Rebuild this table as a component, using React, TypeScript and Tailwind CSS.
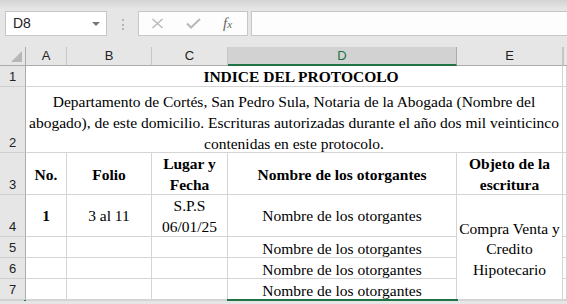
import React from "react";

const cellFont = { fontFamily: '"Liberation Serif", "Times New Roman", serif' };

const colHeaders = [
  { label: "A", selected: false },
  { label: "B", selected: false },
  { label: "C", selected: false },
  { label: "D", selected: true },
  { label: "E", selected: false },
];

const RowHead = ({ n, selected }: { n: number; selected?: boolean }) => (
  <div
    className={
      selected
        ? "flex items-start justify-center border-r-2 border-[#217346] bg-[#d2d2d2] text-[13px] text-[#217346]"
        : "flex items-end justify-center border-r border-b border-r-[#ababab] border-b-[#cfcfcf] bg-[#e6e6e6] pb-[1px] text-[13px] leading-[16px] text-[#222]"
    }
  >
    {selected ? null : n}
  </div>
);

const Cell = ({ className = "", children }: { className?: string; children?: React.ReactNode }) => (
  <div className={"border-r border-b border-[#d4d4d4] bg-white " + className}>{children}</div>
);

const App = () => {
  return (
    <div
      className="h-[304px] w-[567px] overflow-hidden bg-[#e6e6e6]"
      style={{ fontFamily: '"Liberation Sans", Arial, sans-serif' }}
    >
      {/* formula bar */}
      <div className="flex h-[47px] items-start bg-[linear-gradient(to_bottom,#d3d3d3_0px,#e6e6e6_9px)] pt-[11px]">
        <div className="ml-[5px] flex h-[25px] w-[102px] items-center justify-between border border-[#c6c6c6] bg-white pl-[7px] pr-[6px] text-[14px] text-[#222]">
          <span>D8</span>
          <span className="h-0 w-0 border-x-[4px] border-t-[4px] border-x-transparent border-t-[#777]" />
        </div>
        <div className="ml-[15px] flex flex-col gap-[2.5px] pt-[8px]">
          <span className="h-[2px] w-[2px] bg-[#b4b4b4]" />
          <span className="h-[2px] w-[2px] bg-[#b4b4b4]" />
          <span className="h-[2px] w-[2px] bg-[#b4b4b4]" />
        </div>
        <div className="ml-[14px] flex h-[25px] w-[110px] items-center border border-[#c6c6c6] bg-[#fdfdfd]">
          <svg width="13" height="11" viewBox="0 0 13 11" className="ml-[12px]">
            <path d="M1.5 1 L11.5 10 M11.5 1 L1.5 10" stroke="#b8b8b8" strokeWidth="1.4" fill="none" />
          </svg>
          <svg width="15" height="11" viewBox="0 0 15 11" className="ml-[22px]">
            <path d="M1 5.5 L5 9.5 L14 1" stroke="#b8b8b8" strokeWidth="2" fill="none" />
          </svg>
          <span
            className="ml-[22px] text-[15px] italic leading-none text-[#666]"
            style={{ fontFamily: '"Liberation Serif", serif' }}
          >
            f<span className="text-[11px]">x</span>
          </span>
        </div>
        <div className="ml-[3px] h-[25px] flex-1 border border-r-0 border-[#c6c6c6] bg-[#fdfdfd]" />
      </div>

      {/* sheet grid */}
      <div className="grid grid-cols-[26px_41px_85px_76px_229px_106px_1fr] grid-rows-[19px_21px_66px_42px_42px_21px_21px_21px_1fr]">
        {/* column headers */}
        <div className="relative border-r border-b border-r-[#ababab] border-b-[#ababab] bg-[#e6e6e6]">
          <span className="absolute bottom-[3px] right-[3px] h-0 w-0 border-b-[11px] border-l-[11px] border-b-[#b7b7b7] border-l-transparent" />
        </div>
        {colHeaders.map((c) =>
          c.selected ? (
            <div
              key={c.label}
              className="flex items-center justify-center border-r border-b-2 border-r-[#ababab] border-b-[#217346] bg-[#d2d2d2] text-[13px] text-[#217346]"
            >
              {c.label}
            </div>
          ) : (
            <div
              key={c.label}
              className="flex items-center justify-center border-r border-b border-r-[#c6c6c6] border-b-[#ababab] bg-[#e6e6e6] text-[13px] text-[#222]"
            >
              {c.label}
            </div>
          )
        )}
        <div className="border-b border-l border-b-[#ababab] border-l-[#c6c6c6] bg-[#e6e6e6]" />

        {/* row 1 */}
        <RowHead n={1} />
        <Cell className="col-span-5 flex items-center justify-center pl-[14px]">
          <span style={cellFont} className="text-[15.5px] font-bold leading-[21px] text-black">
            INDICE DEL PROTOCOLO
          </span>
        </Cell>
        <Cell />

        {/* row 2 */}
        <RowHead n={2} />
        <Cell className="col-span-5 flex items-end justify-center">
          <p style={cellFont} className="-mb-[2px] whitespace-nowrap text-center text-[15.5px] leading-[21px] text-black">
            Departamento de Cortés, San Pedro Sula, Notaria de la Abogada (Nombre del
            <br />
            abogado), de este domicilio. Escrituras autorizadas durante el año dos mil veinticinco
            <br />
            contenidas en este protocolo.
          </p>
        </Cell>
        <Cell />

        {/* row 3 */}
        <RowHead n={3} />
        {[["No."], ["Folio"], ["Lugar y", "Fecha"], ["Nombre de los otorgantes"], ["Objeto de la", "escritura"]].map(
          (lines, i) => (
            <Cell key={i} className="flex items-center justify-center pt-[1px]">
              <p style={cellFont} className="whitespace-nowrap text-center text-[15.5px] font-bold leading-[21px] text-black">
                {lines.map((l, j) => (
                  <React.Fragment key={j}>
                    {j > 0 && <br />}
                    {l}
                  </React.Fragment>
                ))}
              </p>
            </Cell>
          )
        )}
        <Cell />

        {/* row 4 */}
        <RowHead n={4} />
        <Cell className="flex items-center justify-center">
          <span style={cellFont} className="text-[15.5px] font-bold leading-[21px]">1</span>
        </Cell>
        <Cell className="flex items-center justify-center">
          <span style={cellFont} className="text-[15.5px] leading-[21px]">3 al 11</span>
        </Cell>
        <Cell className="flex items-center justify-center">
          <p style={cellFont} className="text-center text-[15.5px] leading-[21px]">
            S.P.S
            <br />
            06/01/25
          </p>
        </Cell>
        <Cell className="flex items-center justify-center">
          <span style={cellFont} className="text-[15.5px] leading-[21px]">Nombre de los otorgantes</span>
        </Cell>
        <Cell className="row-span-4 flex items-center justify-center pt-[5px]">
          <p style={cellFont} className="text-center text-[15.5px] leading-[20.5px]">
            Compra Venta y
            <br />
            Credito
            <br />
            Hipotecario
          </p>
        </Cell>
        <Cell />

        {/* rows 5-7 */}
        {[5, 6, 7].map((n) => (
          <React.Fragment key={n}>
            <RowHead n={n} />
            <Cell />
            <Cell />
            <Cell />
            <Cell className="flex items-end justify-center">
              <span style={cellFont} className="-mb-[2px] text-[15.5px] leading-[20px]">Nombre de los otorgantes</span>
            </Cell>
            <Cell />
          </React.Fragment>
        ))}

        {/* row 8 */}
        <RowHead n={8} selected />
        <Cell />
        <Cell />
        <Cell />
        <div className="relative bg-white">
          <div className="absolute -left-px -right-px -top-px bottom-0 border-x-2 border-t-2 border-[#217346]" />
        </div>
        <Cell />
        <Cell />
      </div>
    </div>
  );
};

export default App;
